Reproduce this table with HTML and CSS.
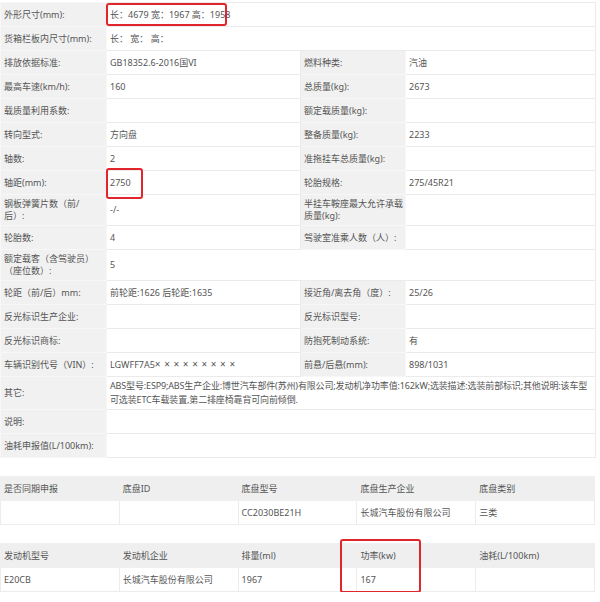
FILE: index.html
```html
<!DOCTYPE html>
<html lang="zh-CN">
<head>
<meta charset="utf-8">
<title>车辆参数</title>
<link rel="stylesheet" href="styles.css">
</head>
<body>
<div class="page">
  <table class="spec">
    <colgroup><col class="w-k1"><col class="w-v1"><col class="w-k2"><col class="w-v2"></colgroup>
    <tr><td class="k">外形尺寸(mm):</td><td colspan="3">长：4679 宽：1967 高：1958</td></tr>
    <tr><td class="k">货箱栏板内尺寸(mm):</td><td colspan="3">长： 宽： 高：</td></tr>
    <tr><td class="k">排放依据标准:</td><td>GB18352.6-2016国VI</td><td class="k">燃料种类:</td><td>汽油</td></tr>
    <tr><td class="k">最高车速(km/h):</td><td>160</td><td class="k">总质量(kg):</td><td>2673</td></tr>
    <tr><td class="k">载质量利用系数:</td><td></td><td class="k">额定载质量(kg):</td><td></td></tr>
    <tr><td class="k">转向型式:</td><td>方向盘</td><td class="k">整备质量(kg):</td><td>2233</td></tr>
    <tr><td class="k">轴数:</td><td>2</td><td class="k">准拖挂车总质量(kg):</td><td></td></tr>
    <tr><td class="k">轴距(mm):</td><td>2750</td><td class="k">轮胎规格:</td><td>275/45R21</td></tr>
    <tr><td class="k">钢板弹簧片数（前/<br>后）:</td><td>-/-</td><td class="k">半挂车鞍座最大允许承载<br>质量(kg):</td><td></td></tr>
    <tr><td class="k">轮胎数:</td><td>4</td><td class="k">驾驶室准乘人数（人）:</td><td></td></tr>
    <tr><td class="k">额定载客（含驾驶员）<br>（座位数）:</td><td colspan="3">5</td></tr>
    <tr><td class="k">轮距（前/后）mm:</td><td>前轮距:1626 后轮距:1635</td><td class="k">接近角/离去角（度）:</td><td>25/26</td></tr>
    <tr><td class="k">反光标识生产企业:</td><td></td><td class="k">反光标识型号:</td><td></td></tr>
    <tr><td class="k">反光标识商标:</td><td></td><td class="k">防抱死制动系统:</td><td>有</td></tr>
    <tr><td class="k">车辆识别代号（VIN）:</td><td>LGWFF7A5<span class="mask">×××××××××</span></td><td class="k">前悬/后悬(mm):</td><td>898/1031</td></tr>
    <tr><td class="k">其它:</td><td colspan="3" class="long">ABS型号:ESP9;ABS生产企业:博世汽车部件(苏州)有限公司;发动机净功率值:162kW;选装描述:选装前部标识;其他说明:该车型可选装ETC车载装置,第二排座椅靠背可向前倾倒.</td></tr>
    <tr><td class="k">说明:</td><td colspan="3"></td></tr>
    <tr><td class="k">油耗申报值(L/100km):</td><td colspan="3"></td></tr>
  </table>

  <table class="grid">
    <tr class="head"><td>是否同期申报</td><td>底盘ID</td><td>底盘型号</td><td>底盘生产企业</td><td>底盘类别</td></tr>
    <tr><td></td><td></td><td>CC2030BE21H</td><td>长城汽车股份有限公司</td><td>三类</td></tr>
  </table>

  <table class="grid">
    <tr class="head"><td>发动机型号</td><td>发动机企业</td><td>排量(ml)</td><td>功率(kw)</td><td>油耗(L/100km)</td></tr>
    <tr><td>E20CB</td><td>长城汽车股份有限公司</td><td>1967</td><td>167</td><td></td></tr>
  </table>

  <div class="mark mark-size"></div>
  <div class="mark mark-wheelbase"></div>
  <div class="mark mark-power"></div>
</div>
</body>
</html>
```

FILE: styles.css
```css
* { box-sizing: border-box; }

body {
  margin: 0;
  background: #fff;
  font-family: "Noto Sans", "Noto Sans CJK SC", sans-serif;
  font-size: 9px;
  color: #555;
}

.page {
  position: relative;
  width: 595px;
  padding-top: 2px;
}

table {
  width: 595px;
  border-collapse: collapse;
  table-layout: fixed;
}

.w-k1 { width: 106px; }
.w-v1 { width: 194px; }
.w-k2 { width: 105px; }
.w-v2 { width: 190px; }

.spec td {
  height: 24px;
  padding: 3px 1px 3px 3px;
  line-height: 12px;
  border: 1px solid #ebebeb;
  vertical-align: middle;
  white-space: nowrap;
}

.spec td.long {
  white-space: normal;
  line-height: 14px;
  padding-top: 2px;
  padding-bottom: 2px;
  letter-spacing: -0.15px;
}

.spec td.k {
  background: #f1f1f1;
  border-color: #f7f7f7;
}

.mask {
  font-size: 10px;
  letter-spacing: 3.6px;
}

.grid {
  margin-top: 18px;
}

.grid td {
  height: 24px;
  padding: 0 3px;
  line-height: 12px;
  border: 1px solid #ececec;
  vertical-align: middle;
}

.grid .head td {
  background: #efefef;
  border-color: #efefef;
}

.mark {
  position: absolute;
  border: 2.5px solid #e0262b;
  border-radius: 3px;
}

.mark-size { left: 106px; top: 3px; width: 121px; height: 23px; }
.mark-wheelbase { left: 106px; top: 168px; width: 37px; height: 31px; }
.mark-power { left: 340px; top: 539px; width: 81px; height: 54px; }
```
